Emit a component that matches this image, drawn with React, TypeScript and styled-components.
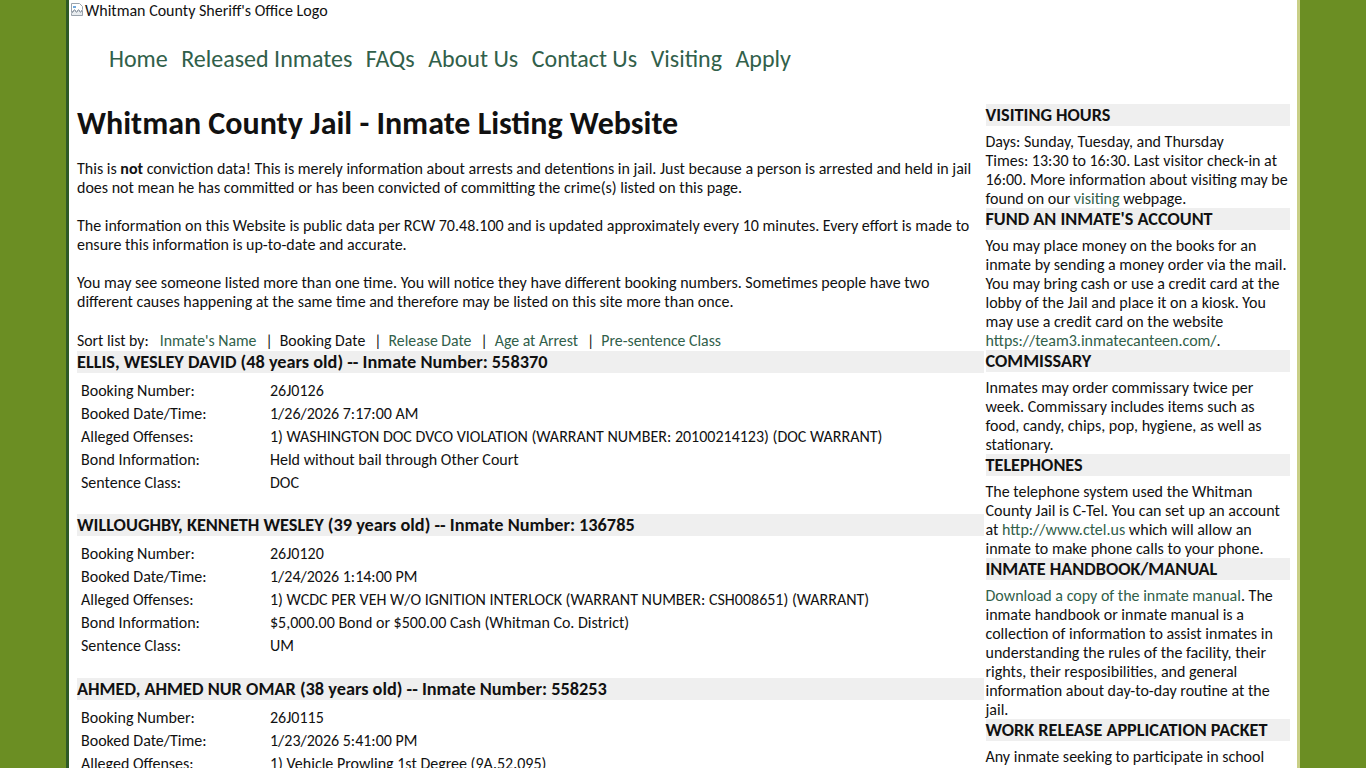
import * as React from 'react';
import styled, { createGlobalStyle } from 'styled-components';

const GlobalStyle = createGlobalStyle`
	body {
		margin: 0;
		background: #6b8e23;
		font-family: Calibri, Lato, 'Liberation Sans', sans-serif;
		color: #111;
	}
`;

const Page = styled.div`
	width: 1228px;
	margin: 0 0 0 66px;
	background: #fff;
	border-left: 3px solid #2e5a26;
	border-right: 3px solid #c9cf86;
	min-height: 768px;
`;

const LogoLine = styled.div`
	display: flex;
	align-items: center;
	height: 20px;
	font-size: 16px;
`;

const BrokenImg = styled.span`
	display: inline-block;
	width: 16px;
	height: 16px;
`;

const Nav = styled.nav`
	display: flex;
	gap: 13.5px;
	padding: 24px 0 0 40px;
	font-size: 24px;
	line-height: 29px;
`;

const NavLink = styled.a`
	color: #31604a;
	text-decoration: none;
`;

const Columns = styled.div`
	display: flex;
	padding: 31px 7px 0 8px;
`;

const Main = styled.div`
	width: 908px;
`;

const Title = styled.h1`
	margin: 0 0 15px;
	font-size: 32px;
	font-weight: 700;
	line-height: 40px;
`;

const Para = styled.p`
	margin: 0 0 19px;
	font-size: 16px;
	line-height: 19px;
`;

const Link = styled.a`
	color: #31604a;
	text-decoration: none;
`;

const SortBar = styled.div`
	display: flex;
	margin-top: 20px;
	margin-bottom: 0.5px;
	font-size: 15.8px;
	line-height: 19px;
`;

const SortLabel = styled.span`
	margin-right: 11px;
`;

const Sep = styled.span`
	padding: 0 7px 0 9px;
`;

const InmateHeader = styled.div<{ $first?: boolean }>`
	background: #efefef;
	font-size: 18.3px;
	font-weight: 700;
	line-height: 22px;
	margin-top: ${(p) => (p.$first ? '0' : '20.5px')};
`;

const DetailTable = styled.table`
	border-collapse: collapse;
	margin-top: 6px;
	font-size: 16px;
	line-height: 19px;
`;

const Label = styled.td`
	width: 181px;
	padding: 2px 4px;
	vertical-align: top;
`;

const Value = styled.td`
	padding: 2px 4px;
	vertical-align: top;
`;

const Sidebar = styled.aside`
	width: 305px;
	margin-left: 2px;
	font-size: 16px;
	line-height: 19px;
`;

const SideHeader = styled.div`
	background: #efefef;
	font-size: 18.2px;
	font-weight: 700;
	line-height: 22px;
	margin-bottom: 6px;
	text-transform: uppercase;
`;

const SideText = styled.div``;

type Inmate = {
	name: string;
	age: number;
	number: string;
	booking: string;
	date: string;
	offense: string;
	bond: string;
	sentence: string;
};

const inmates: Inmate[] = [
	{
		name: 'ELLIS, WESLEY DAVID',
		age: 48,
		number: '558370',
		booking: '26J0126',
		date: '1/26/2026 7:17:00 AM',
		offense: '1) WASHINGTON DOC DVCO VIOLATION (WARRANT NUMBER: 20100214123) (DOC WARRANT)',
		bond: 'Held without bail through Other Court',
		sentence: 'DOC',
	},
	{
		name: 'WILLOUGHBY, KENNETH WESLEY',
		age: 39,
		number: '136785',
		booking: '26J0120',
		date: '1/24/2026 1:14:00 PM',
		offense: '1) WCDC PER VEH W/O IGNITION INTERLOCK (WARRANT NUMBER: CSH008651) (WARRANT)',
		bond: '$5,000.00 Bond or $500.00 Cash (Whitman Co. District)',
		sentence: 'UM',
	},
	{
		name: 'AHMED, AHMED NUR OMAR',
		age: 38,
		number: '558253',
		booking: '26J0115',
		date: '1/23/2026 5:41:00 PM',
		offense: '1) Vehicle Prowling 1st Degree (9A.52.095)',
		bond: '$1,000.00 Bond or $100.00 Cash (Whitman Co. District)',
		sentence: 'PRE',
	},
];

const navItems = ['Home', 'Released Inmates', 'FAQs', 'About Us', 'Contact Us', 'Visiting', 'Apply'];

function BrokenImageIcon() {
	return (
		<BrokenImg>
			<svg width="16" height="16" viewBox="0 0 16 16">
				<path d="M2.5 1.5h8l3 3v3l-2 2-2-2-2 2-2-2-3 3z" fill="#fff" stroke="#9aa3ad" />
				<path d="M2.5 13.5v-2l3-3 2 2 2-2 2 2 2-2v5z" fill="#e8ecef" stroke="#9aa3ad" />
				<path d="M4 4h3v2H4z" fill="#6fa8dc" />
			</svg>
		</BrokenImg>
	);
}

function InmateDetails({ m }: { m: Inmate }) {
	const rows: [string, string][] = [
		['Booking Number:', m.booking],
		['Booked Date/Time:', m.date],
		['Alleged Offenses:', m.offense],
		['Bond Information:', m.bond],
		['Sentence Class:', m.sentence],
	];

	return (
		<DetailTable>
			<tbody>
				{rows.map(([label, value]) => (
					<tr key={label}>
						<Label>{label}</Label>
						<Value>{value}</Value>
					</tr>
				))}
			</tbody>
		</DetailTable>
	);
}

export default function App() {
	return (
		<>
			<GlobalStyle />
			<Page>
				<LogoLine>
					<BrokenImageIcon />
					Whitman County Sheriff's Office Logo
				</LogoLine>
				<Nav>
					{navItems.map((item) => (
						<NavLink key={item} href="#">{item}</NavLink>
					))}
				</Nav>
				<Columns>
					<Main>
						<Title>Whitman County Jail - Inmate Listing Website</Title>
						<Para>
							This is <b>not</b> conviction data! This is merely information about arrests and detentions in jail. Just because a person is arrested and held in jail does not mean he has committed or has been convicted of committing the crime(s) listed on this page.
						</Para>
						<Para>
							The information on this Website is public data per RCW 70.48.100 and is updated approximately every 10 minutes. Every effort is made to ensure this information is up-to-date and accurate.
						</Para>
						<Para>
							You may see someone listed more than one time. You will notice they have different booking numbers. Sometimes people have two different causes happening at the same time and therefore may be listed on this site more than once.
						</Para>
						<SortBar>
							<SortLabel>Sort list by:</SortLabel>
							<Link href="#">Inmate's Name</Link>
							<Sep>|</Sep>
							<span>Booking Date</span>
							<Sep>|</Sep>
							<Link href="#">Release Date</Link>
							<Sep>|</Sep>
							<Link href="#">Age at Arrest</Link>
							<Sep>|</Sep>
							<Link href="#">Pre-sentence Class</Link>
						</SortBar>
						{inmates.map((m, i) => (
							<React.Fragment key={m.number}>
								<InmateHeader $first={i === 0}>
									{m.name} ({m.age} years old) -- Inmate Number: {m.number}
								</InmateHeader>
								<InmateDetails m={m} />
							</React.Fragment>
						))}
					</Main>
					<Sidebar>
						<SideHeader>Visiting Hours</SideHeader>
						<SideText>
							Days: Sunday, Tuesday, and Thursday<br />
							Times: 13:30 to 16:30. Last visitor check-in at 16:00. More information about visiting may be found on our <Link href="#">visiting</Link> webpage.
						</SideText>
						<SideHeader>Fund an Inmate's Account</SideHeader>
						<SideText>
							You may place money on the books for an inmate by sending a money order via the mail. You may bring cash or use a credit card at the lobby of the Jail and place it on a kiosk. You may use a credit card on the website <Link href="#">https://team3.inmatecanteen.com/</Link>.
						</SideText>
						<SideHeader>Commissary</SideHeader>
						<SideText>
							Inmates may order commissary twice per week. Commissary includes items such as food, candy, chips, pop, hygiene, as well as stationary.
						</SideText>
						<SideHeader>Telephones</SideHeader>
						<SideText>
							The telephone system used the Whitman County Jail is C-Tel. You can set up an account at <Link href="#">http://www.ctel.us</Link> which will allow an inmate to make phone calls to your phone.
						</SideText>
						<SideHeader>Inmate Handbook/Manual</SideHeader>
						<SideText>
							<Link href="#">Download a copy of the inmate manual</Link>. The inmate handbook or inmate manual is a collection of information to assist inmates in understanding the rules of the facility, their rights, their resposibilities, and general information about day-to-day routine at the jail.
						</SideText>
						<SideHeader>Work Release Application Packet</SideHeader>
						<SideText>
							Any inmate seeking to participate in school release or work release must fill out the application packet.
						</SideText>
					</Sidebar>
				</Columns>
			</Page>
		</>
	);
}
